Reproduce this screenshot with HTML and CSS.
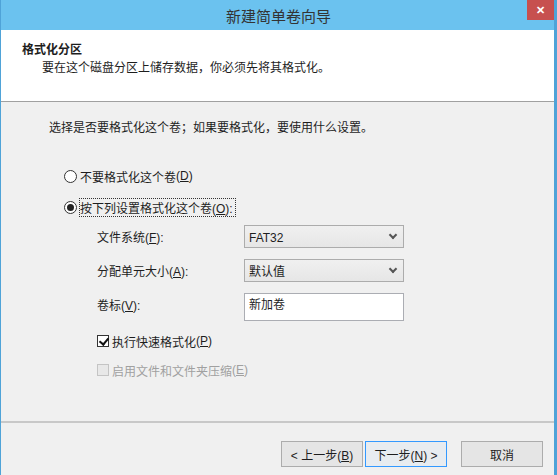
FILE: index.html
```html
<!DOCTYPE html>
<html>
<head>
  <meta charset="UTF-8" />
  <title>新建简单卷向导</title>
  <link rel="stylesheet" href="styles.css">
</head>
<body>
  <div class="window">
    <div class="titlebar">
      <span class="title">新建简单卷向导</span>
      <button class="close">✕</button>
    </div>

    <div class="header">
      <h1>格式化分区</h1>
      <p>要在这个磁盘分区上储存数据，你必须先将其格式化。</p>
    </div>

    <div class="content">
      <p class="intro">选择是否要格式化这个卷；如果要格式化，要使用什么设置。</p>

      <label class="radio"><span class="dot"></span>不要格式化这个卷<span class="key">(<u>D</u>)</span></label>
      <label class="radio checked"><span class="dot"></span><span class="focus">按下列设置格式化这个卷<span class="key">(<u>O</u>):</span></span></label>

      <div class="settings">
        <div class="row">
          <span class="label">文件系统<span class="key">(<u>F</u>):</span></span>
          <div class="select"><span class="key">FAT32</span><span class="chev"></span></div>
        </div>
        <div class="row">
          <span class="label">分配单元大小<span class="key">(<u>A</u>):</span></span>
          <div class="select">默认值<span class="chev"></span></div>
        </div>
        <div class="row">
          <span class="label">卷标<span class="key">(<u>V</u>):</span></span>
          <div class="input">新加卷</div>
        </div>

        <label class="check on"><span class="box"></span>执行快速格式化<span class="key">(<u>P</u>)</span></label>
        <label class="check disabled"><span class="box"></span>启用文件和文件夹压缩<span class="key">(<u>E</u>)</span></label>
      </div>
    </div>

    <div class="footer">
      <button class="btn"><span class="key">&lt; </span>上一步<span class="key">(<u>B</u>)</span></button>
      <button class="btn default">下一步<span class="key">(<u>N</u>) &gt;</span></button>
      <button class="btn cancel">取消</button>
    </div>
  </div>
</body>
</html>
```

FILE: styles.css
```css
:root {
  --frame: #4fa3d8;
  --title: #6bc2ef;
  --face: #f0f0f0;
  --text: #1e1e1e;
}

* {
  margin: 0;
  padding: 0;
  box-sizing: border-box;
}

body {
  font-family: "Noto Sans CJK SC", sans-serif;
  font-size: 12px;
  color: var(--text);
  background: #fff;
  text-autospace: no-autospace;
}

/* latin parts: access keys, punctuation, values */
.key {
  font-family: "Liberation Sans", sans-serif;
}

u {
  text-decoration: underline;
  text-underline-offset: 1px;
}

.window {
  width: 557px;
  height: 475px;
  display: flex;
  flex-direction: column;
  border-left: 1px solid var(--frame);
  border-right: 3px solid var(--frame);
  background: var(--face);
}

/* title bar */
.titlebar {
  height: 30px;
  background: var(--title);
  position: relative;
  display: flex;
  align-items: center;
  justify-content: center;
}

.title {
  font-size: 15px;
  color: #333;
  padding-left: 2px;
}

.close {
  position: absolute;
  top: 0;
  right: 0;
  width: 27px;
  height: 20px;
  background: #c7504f;
  color: #fff;
  border: none;
  font-size: 11px;
  font-weight: 700;
  line-height: 20px;
}

/* white header */
.header {
  height: 72px;
  background: #fff;
  padding: 10px 0 0 21px;
  border-bottom: 1px solid #a0a0a0;
}

.header h1 {
  font-size: 12px;
  font-weight: 700;
  line-height: 18px;
}

.header p {
  padding-left: 20px;
  line-height: 18px;
}

/* body */
.content {
  flex: 1;
  padding: 16px 0 0 48px;
}

.intro {
  line-height: 18px;
  margin-bottom: 31px;
}

.radio {
  display: flex;
  align-items: center;
  margin-left: 15px;
  height: 18px;
  margin-bottom: 13px;
}

.dot {
  width: 13px;
  height: 13px;
  margin-right: 3px;
  border-radius: 50%;
  border: 1px solid #333;
  background: #fff;
  position: relative;
}

.radio.checked .dot::after {
  content: "";
  position: absolute;
  left: 2px;
  top: 2px;
  width: 7px;
  height: 7px;
  border-radius: 50%;
  background: #222;
}

.focus {
  outline: 1px dotted #333;
  outline-offset: 0;
  padding-right: 2px;
}

.settings {
  padding-left: 48px;
  margin-top: -4px;
}

.row {
  display: flex;
  align-items: flex-start;
  margin-bottom: 11px;
}

.label {
  width: 147px;
  line-height: 18px;
  padding-top: 3px;
}

.select {
  width: 160px;
  height: 23px;
  border: 1px solid #acacac;
  background: linear-gradient(#f0f0f0, #e6e6e6);
  padding: 0 0 0 4px;
  line-height: 21px;
  position: relative;
}

.chev {
  position: absolute;
  right: 7px;
  top: 6px;
  width: 6px;
  height: 6px;
  border-right: 2px solid #555;
  border-bottom: 2px solid #555;
  transform: rotate(45deg);
}

.input {
  width: 160px;
  height: 28px;
  border: 1px solid #abadb3;
  background: #fff;
  padding: 1px 0 0 4px;
  line-height: 18px;
}

.check {
  display: flex;
  align-items: center;
  height: 18px;
  margin-bottom: 11px;
}

.check:first-of-type {
  margin-top: 4px;
}

.box {
  width: 12px;
  height: 12px;
  margin-right: 3px;
  border: 1px solid #333;
  background: #fff;
  position: relative;
}

.check.on .box::after {
  content: "";
  position: absolute;
  left: 3px;
  top: 0;
  width: 4px;
  height: 7px;
  border-right: 2px solid #111;
  border-bottom: 2px solid #111;
  transform: rotate(40deg);
}

.check.disabled {
  color: #a0a0a0;
}

.check.disabled .box {
  border-color: #c4c4c4;
  background: #e8e8e8;
}

/* buttons */
.footer {
  height: 54px;
  border-top: 2px solid #c8c8c8;
  display: flex;
  align-items: flex-start;
  padding: 18px 0 0 280px;
}

.btn {
  font-family: inherit;
  font-size: 12px;
  color: var(--text);
  width: 82px;
  height: 26px;
  background: #e5e5e5;
  border: 1px solid #acacac;
  margin-right: 2px;
}

.btn.default {
  border-color: #3399ff;
  background: #e8ecf0;
}

.btn.cancel {
  margin-left: 12px;
}
```
